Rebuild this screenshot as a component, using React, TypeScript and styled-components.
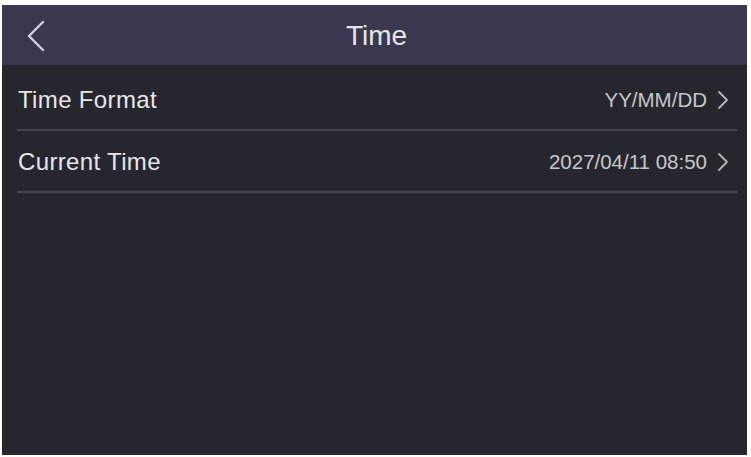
import React from "react";
import styled, { createGlobalStyle } from "styled-components";

const GlobalStyle = createGlobalStyle`
  html, body {
    margin: 0;
    background: #ffffff;
  }
  body {
    padding: 5px 4px 2px 2px;
    font-family: "Liberation Sans", Arial, sans-serif;
  }
`;

const App = (): JSX.Element => {
  return (
    <>
      <GlobalStyle />
      <Screen>
        <Header>
          <BackButton aria-label="Back">
            <svg width="20" height="32" viewBox="0 0 20 32" fill="none">
              <path d="M17 2 L3 16 L17 30" stroke="#d4d4dc" strokeWidth="2.4" strokeLinecap="round" strokeLinejoin="round" />
            </svg>
          </BackButton>
          <Title>Time</Title>
          <span />
        </Header>
        <List>
          {rows.map((_) => (
            <Row key={_.key}>
              <Label>{_.label}</Label>
              <Value>
                {_.value}
                <svg width="12" height="20" viewBox="0 0 12 20" fill="none">
                  <path d="M2 2 L10 10 L2 18" stroke="#b4b4ba" strokeWidth="1.8" strokeLinecap="round" strokeLinejoin="round" />
                </svg>
              </Value>
            </Row>
          ))}
        </List>
      </Screen>
    </>
  );
};

export default App;

const Screen = styled.div`
  height: 450px;
  background: #26262e;
  display: flex;
  flex-direction: column;
`;

const Header = styled.div`
  height: 60px;
  background: #3a384f;
  display: grid;
  grid-template-columns: 70px 1fr 70px;
  align-items: center;
`;

const BackButton = styled.div`
  display: flex;
  align-items: center;
  padding-left: 24px;
  padding-top: 2px;
`;

const Title = styled.div`
  text-align: center;
  color: #e4e4ea;
  font-size: 28px;
  padding-top: 2px;
  padding-left: 4px;
`;

const List = styled.div`
  padding: 4px 10px 0 15px;
  display: flex;
  flex-direction: column;
`;

const Row = styled.div`
  height: 60px;
  display: flex;
  align-items: center;
  justify-content: space-between;
  border-bottom: 2px solid #45454d;
`;

const Label = styled.div`
  color: #e6e6ea;
  font-size: 24px;
  letter-spacing: 0.35px;
  padding-left: 1px;
  padding-top: 2px;
`;

const Value = styled.div`
  display: flex;
  align-items: center;
  gap: 10px;
  color: #c6c6ca;
  font-size: 20.5px;
  padding-right: 8px;
  padding-top: 2px;
`;

const rows = [
  { key: 1, label: "Time Format", value: "YY/MM/DD" },
  { key: 2, label: "Current Time", value: "2027/04/11 08:50" },
];
